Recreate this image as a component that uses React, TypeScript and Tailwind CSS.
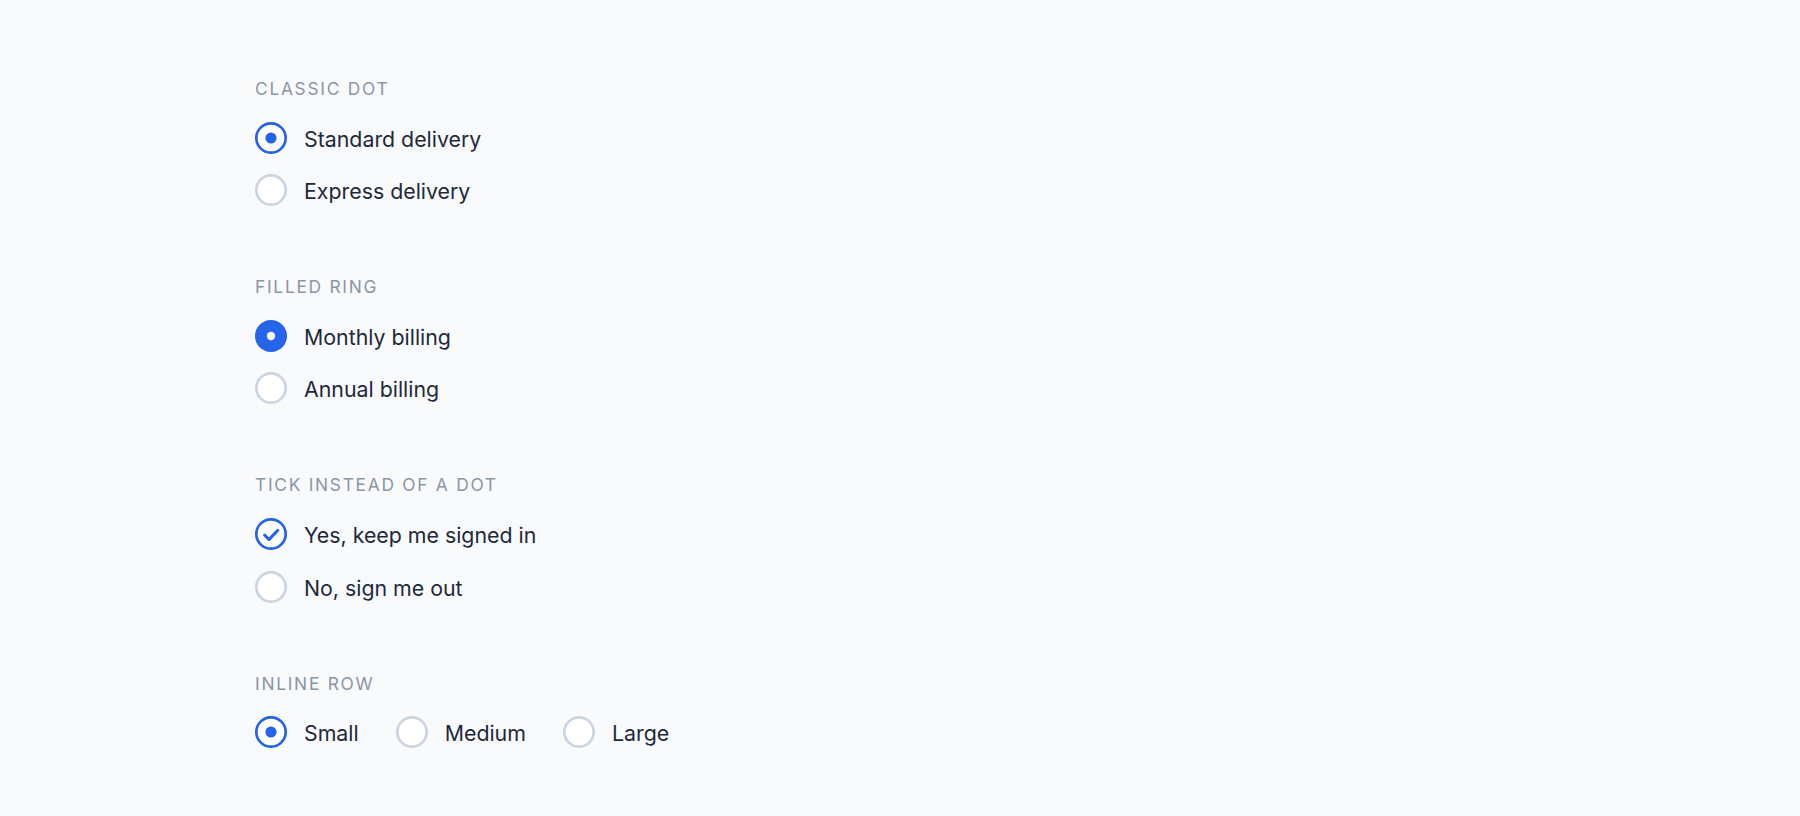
import React from "react";

type Variant = "dot" | "ring" | "tick";

function RadioMark({ checked, variant }: { checked: boolean; variant: Variant }) {
  if (!checked) {
    return (
      <svg width="32" height="32" viewBox="0 0 32 32" className="shrink-0">
        <circle cx="16" cy="16" r="14.67" fill="#ffffff" stroke="#cbd5e1" strokeWidth="2.67" />
      </svg>
    );
  }
  if (variant === "ring") {
    return (
      <svg width="32" height="32" viewBox="0 0 32 32" className="shrink-0">
        <circle cx="16" cy="16" r="16" fill="#2563eb" />
        <circle cx="16" cy="16" r="4.2" fill="#ffffff" />
      </svg>
    );
  }
  if (variant === "tick") {
    return (
      <svg width="32" height="32" viewBox="0 0 32 32" className="shrink-0">
        <circle cx="16" cy="16" r="14.67" fill="#ffffff" stroke="#2563eb" strokeWidth="2.67" />
        <polyline
          points="9.6,17 13.9,21.6 22.8,12.3"
          fill="none"
          stroke="#2563eb"
          strokeWidth="3"
          strokeLinecap="round"
          strokeLinejoin="round"
        />
      </svg>
    );
  }
  return (
    <svg width="32" height="32" viewBox="0 0 32 32" className="shrink-0">
      <circle cx="16" cy="16" r="14.67" fill="#ffffff" stroke="#2563eb" strokeWidth="2.67" />
      <circle cx="16" cy="16" r="5.6" fill="#2563eb" />
    </svg>
  );
}

function Option({ label, checked, variant }: { label: string; checked: boolean; variant: Variant }) {
  return (
    <label className="flex h-8 items-center gap-[17px] cursor-pointer">
      <RadioMark checked={checked} variant={variant} />
      <span className="text-[21.33px] leading-8 text-[#1e293b] pt-[2px]">{label}</span>
    </label>
  );
}

function GroupTitle({ children }: { children: React.ReactNode }) {
  return (
    <div className="text-[17.33px] leading-[26px] tracking-[0.1em] uppercase text-[#8b95a5]">
      {children}
    </div>
  );
}

function StackedGroup({ title, variant, options }: { title: string; variant: Variant; options: string[] }) {
  return (
    <section className="flex flex-col gap-[19.5px]">
      <GroupTitle>{title}</GroupTitle>
      <div className="flex flex-col gap-[20.7px]">
        {options.map((o, i) => (
          <Option key={o} label={o} checked={i === 0} variant={variant} />
        ))}
      </div>
    </section>
  );
}

export default function App() {
  return (
    <div
      className="min-h-screen w-full bg-[#f8fafc] pt-[76px] pl-[255px]"
      style={{ fontFamily: "Inter, 'Noto Sans', sans-serif" }}
    >
      <div className="flex flex-col gap-[68px]">
        <StackedGroup title="Classic dot" variant="dot" options={["Standard delivery", "Express delivery"]} />
        <StackedGroup title="Filled ring" variant="ring" options={["Monthly billing", "Annual billing"]} />
        <StackedGroup
          title="Tick instead of a dot"
          variant="tick"
          options={["Yes, keep me signed in", "No, sign me out"]}
        />
        <section className="flex flex-col gap-[19.5px]">
          <GroupTitle>Inline row</GroupTitle>
          <div className="flex items-center gap-[37px]">
            {["Small", "Medium", "Large"].map((o, i) => (
              <Option key={o} label={o} checked={i === 0} variant="dot" />
            ))}
          </div>
        </section>
      </div>
    </div>
  );
}
